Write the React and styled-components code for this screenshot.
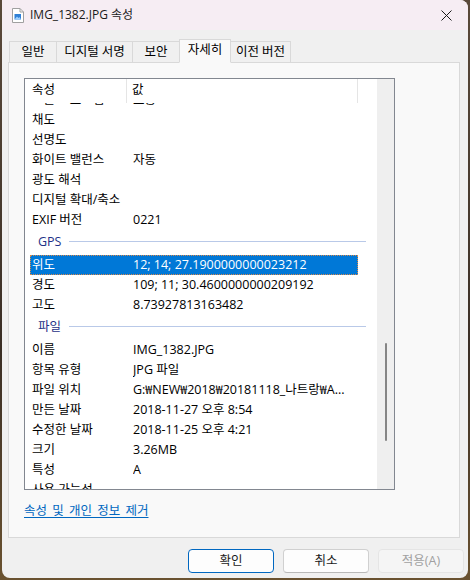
import React from "react"
import styled, { createGlobalStyle } from "styled-components"

const GlobalStyle = createGlobalStyle`
    body {
        margin: 0;
        background: #3b2f27;
        font-family: "Open Sans", "Noto Sans CJK KR", sans-serif;
        font-size: 12.5px;
        color: #000;
    }
`

const Desktop = styled.div`
    width: 470px;
    height: 580px;
    padding: 0 2px 2px 2px;
    box-sizing: border-box;
    display: flex;
    background: linear-gradient(180deg, #5a4a3a 0%, #3a2e25 60%, #6a5230 100%);
`

const Window = styled.div`
    flex: 1;
    display: flex;
    flex-direction: column;
    background: #f0f0f0;
    border-radius: 0 8px 8px 8px;
    overflow: hidden;
`

const TitleBar = styled.div`
    height: 30px;
    flex-shrink: 0;
    display: flex;
    align-items: center;
    padding-left: 10px;
    background: #f6edf3;
    color: #1a1a1a;
`

const TitleText = styled.span`
    flex: 1;
    margin-left: 6px;
    font-size: 12px;
    line-height: 16px;
`

const CloseButton = styled.div`
    width: 46px;
    height: 30px;
    display: flex;
    align-items: center;
    justify-content: center;
    margin-right: -1px;
`

const Body = styled.div`
    flex: 1;
    display: flex;
    flex-direction: column;
    padding: 8px 8px 0 6px;
`

const TabStrip = styled.div`
    height: 24px;
    display: flex;
    align-items: flex-end;
    padding-left: 2px;
`

const Tab = styled.div`
    width: ${p => p.$w}px;
    height: ${p => (p.$active ? 24 : 21)}px;
    box-sizing: border-box;
    margin-left: -1px;
    margin-bottom: ${p => (p.$active ? -1 : 0)}px;
    position: relative;
    z-index: ${p => (p.$active ? 2 : 1)};
    display: flex;
    align-items: center;
    justify-content: center;
    border: 1px solid #d9d9d9;
    border-bottom: ${p => (p.$active ? "1px solid #f9f9f9" : "none")};
    background: ${p => (p.$active ? "#f9f9f9" : "#f0f0f0")};
    line-height: 16px;
    padding-bottom: ${p => (p.$active ? 2 : 0)}px;
    white-space: nowrap;
`

const Panel = styled.div`
    height: 476px;
    box-sizing: border-box;
    border: 1px solid #d9d9d9;
    background: #f9f9f9;
    padding: 15px 0 0 15px;
    display: flex;
    flex-direction: column;
`

const ListBox = styled.div`
    width: 371px;
    height: 412px;
    box-sizing: border-box;
    border: 1px solid #828790;
    background: #fff;
    display: flex;
`

const ListMain = styled.div`
    flex: 1;
    display: flex;
    flex-direction: column;
    min-width: 0;
`

const Header = styled.div`
    height: 24px;
    flex-shrink: 0;
    display: flex;
`

const HeaderCell = styled.div`
    width: ${p => p.$w}px;
    box-sizing: border-box;
    padding-left: ${p => p.$pad}px;
    border-right: ${p => (p.$divider ? "1px solid #e5e5e5" : "none")};
    line-height: 22px;
`

const ScrollArea = styled.div`
    flex: 1;
    overflow: hidden;
`

const Rows = styled.div`
    margin-top: -13px;
`

const Row = styled.div`
    width: 328px;
    height: 20px;
    box-sizing: border-box;
    margin-left: 5px;
    padding-left: 2px;
    display: flex;
    align-items: center;
    line-height: 20px;
    white-space: nowrap;
    background: ${p => (p.$selected ? "#0078d7" : "transparent")};
    color: ${p => (p.$selected ? "#fff" : "#000")};
    outline: ${p => (p.$selected ? "1px dotted #d9894a" : "none")};
    outline-offset: -1px;
`

const NameCell = styled.div`
    width: 101px;
    flex-shrink: 0;
`

const ValueCell = styled.div`
    flex: 1;
    overflow: hidden;
`

const Group = styled.div`
    height: 25px;
    display: flex;
    align-items: center;
    padding: 0 0 2px 13px;
    box-sizing: border-box;
    width: 341px;
    color: #1e3287;
    line-height: 16px;

    &::after {
        content: "";
        flex: 1;
        height: 1px;
        margin-left: 8px;
        background: #b9c9e8;
    }
`

const Track = styled.div`
    width: 17px;
    flex-shrink: 0;
    background: #efefef;
    display: flex;
    flex-direction: column;
    align-items: center;
`

const Thumb = styled.div`
    width: 2px;
    height: 98px;
    margin-top: 264px;
    border-radius: 1px;
    background: #858585;
`

const RemoveLink = styled.a`
    margin-top: 13px;
    align-self: flex-start;
    color: #0067c0;
    text-decoration: underline;
    text-underline-offset: 2px;
    word-spacing: 2px;
    line-height: 16px;
    cursor: pointer;
`

const Buttons = styled.div`
    display: flex;
    justify-content: flex-end;
    gap: 9px;
    margin-top: 11px;
    margin-right: -4px;
`

const Button = styled.button`
    width: 86px;
    height: 24px;
    border-radius: 4px;
    font-family: inherit;
    font-size: 12.5px;
    padding: 0;
    line-height: 16px;
    background: ${p => (p.$disabled ? "#f5f5f5" : "#fdfdfd")};
    color: ${p => (p.$disabled ? "#a0a0a0" : "#1a1a1a")};
    border: 1px solid ${p => (p.$primary ? "#0067c0" : p.$disabled ? "#e5e5e5" : "#d0d0d0")};
    border-bottom-color: ${p => (p.$primary ? "#0067c0" : p.$disabled ? "#e5e5e5" : "#b8b8b8")};
`

const FileIcon = () => (
    <svg width="12" height="15" viewBox="0 0 12 15">
        <path d="M0.5 0.5h7.5l3.5 3.5v10.5h-11z" fill="#fff" stroke="#a0a0a0" />
        <path d="M8 0.5v3.5h3.5" fill="none" stroke="#a0a0a0" />
        <rect x="2.5" y="6" width="6.5" height="5.5" fill="#2f7fd6" />
        <path d="M2.5 11.5l2.5-3 1.5 1.5 1-1 1.5 2.5z" fill="#9fd0ff" />
    </svg>
)

const CloseIcon = () => (
    <svg width="11" height="11" viewBox="0 0 11 11">
        <path d="M0.5 0.5l10 10M10.5 0.5l-10 10" stroke="#1a1a1a" strokeWidth="1" />
    </svg>
)

const tabs = [
    { label: "일반", w: 48 },
    { label: "디지털 서명", w: 77 },
    { label: "보안", w: 48 },
    { label: "자세히", w: 52, active: true },
    { label: "이전 버전", w: 61 },
]

const items = [
    ["노출 프로그램", "보통"],
    ["채도", ""],
    ["선명도", ""],
    ["화이트 밸런스", "자동"],
    ["광도 해석", ""],
    ["디지털 확대/축소", ""],
    ["EXIF 버전", "0221"],
    { group: "GPS" },
    ["위도", "12; 14; 27.1900000000023212", true],
    ["경도", "109; 11; 30.4600000000209192"],
    ["고도", "8.73927813163482"],
    { group: "파일" },
    ["이름", "IMG_1382.JPG"],
    ["항목 유형", "JPG 파일"],
    ["파일 위치", "G:₩NEW₩2018₩20181118_나트랑₩A..."],
    ["만든 날짜", "2018-11-27 오후 8:54"],
    ["수정한 날짜", "2018-11-25 오후 4:21"],
    ["크기", "3.26MB"],
    ["특성", "A"],
    ["사용 가능성", ""],
]

const App = () => {
    return (
        <Desktop>
            <GlobalStyle />
            <Window>
                <TitleBar>
                    <FileIcon />
                    <TitleText>IMG_1382.JPG 속성</TitleText>
                    <CloseButton>
                        <CloseIcon />
                    </CloseButton>
                </TitleBar>
                <Body>
                    <TabStrip>
                        {tabs.map(t => (
                            <Tab key={t.label} $w={t.w} $active={t.active}>{t.label}</Tab>
                        ))}
                    </TabStrip>
                    <Panel>
                        <ListBox>
                            <ListMain>
                                <Header>
                                    <HeaderCell $w={102} $pad={7} $divider>속성</HeaderCell>
                                    <HeaderCell $w={231} $pad={5} $divider>값</HeaderCell>
                                </Header>
                                <ScrollArea>
                                    <Rows>
                                        {items.map((it, i) =>
                                            it.group ? (
                                                <Group key={i}>{it.group}</Group>
                                            ) : (
                                                <Row key={i} $selected={it[2]}>
                                                    <NameCell>{it[0]}</NameCell>
                                                    <ValueCell>{it[1]}</ValueCell>
                                                </Row>
                                            )
                                        )}
                                    </Rows>
                                </ScrollArea>
                            </ListMain>
                            <Track>
                                <Thumb />
                            </Track>
                        </ListBox>
                        <RemoveLink>속성 및 개인 정보 제거</RemoveLink>
                    </Panel>
                    <Buttons>
                        <Button $primary>확인</Button>
                        <Button>취소</Button>
                        <Button $disabled>적용(A)</Button>
                    </Buttons>
                </Body>
            </Window>
        </Desktop>
    )
}

export default App
